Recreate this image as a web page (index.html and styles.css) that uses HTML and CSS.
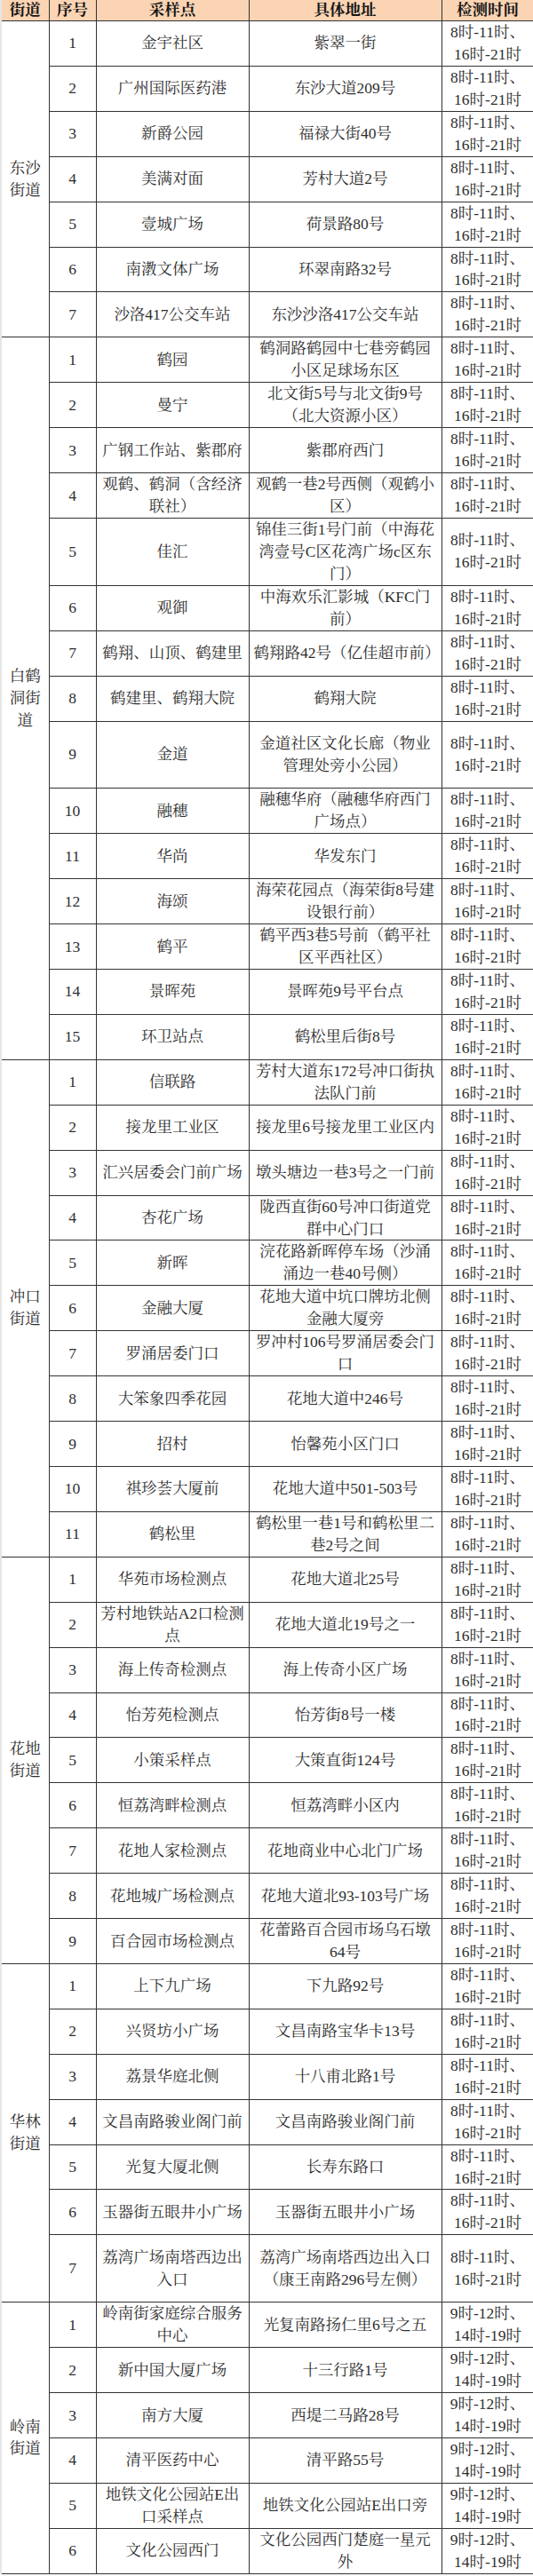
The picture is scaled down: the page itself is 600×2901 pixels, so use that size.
FILE: index.html
```html
<!DOCTYPE html>
<html lang="zh-CN">
<head>
<meta charset="utf-8">
<title>核酸采样点</title>
<link rel="stylesheet" href="styles.css">
</head>
<body>
<table class="sched">
<colgroup>
<col class="c-street"><col class="c-no"><col class="c-site"><col class="c-addr"><col class="c-time">
</colgroup>
<thead>
<tr><th>街道</th><th>序号</th><th>采样点</th><th>具体地址</th><th>检测时间</th></tr>
</thead>
<tbody>
<tr><td class="street" rowspan="7">东沙街道</td><td class="no">1</td><td class="site">金宇社区</td><td>紫翠一街</td><td class="time">8时-11时、<br>16时-21时</td></tr>
<tr><td class="no">2</td><td class="site">广州国际医药港</td><td>东沙大道209号</td><td class="time">8时-11时、<br>16时-21时</td></tr>
<tr><td class="no">3</td><td class="site">新爵公园</td><td>福禄大街40号</td><td class="time">8时-11时、<br>16时-21时</td></tr>
<tr><td class="no">4</td><td class="site">美满对面</td><td>芳村大道2号</td><td class="time">8时-11时、<br>16时-21时</td></tr>
<tr><td class="no">5</td><td class="site">壹城广场</td><td>荷景路80号</td><td class="time">8时-11时、<br>16时-21时</td></tr>
<tr><td class="no">6</td><td class="site">南漖文体广场</td><td>环翠南路32号</td><td class="time">8时-11时、<br>16时-21时</td></tr>
<tr><td class="no">7</td><td class="site">沙洛417公交车站</td><td>东沙沙洛417公交车站</td><td class="time">8时-11时、<br>16时-21时</td></tr>

<tr><td class="street" rowspan="15">白鹤洞街道</td><td class="no">1</td><td class="site">鹤园</td><td>鹤洞路鹤园中七巷旁鹤园小区足球场东区</td><td class="time">8时-11时、<br>16时-21时</td></tr>
<tr><td class="no">2</td><td class="site">曼宁</td><td>北文街5号与北文街9号（北大资源小区）</td><td class="time">8时-11时、<br>16时-21时</td></tr>
<tr><td class="no">3</td><td class="site">广钢工作站、紫郡府</td><td>紫郡府西门</td><td class="time">8时-11时、<br>16时-21时</td></tr>
<tr><td class="no">4</td><td class="site">观鹤、鹤洞（含经济联社）</td><td>观鹤一巷2号西侧（观鹤小区）</td><td class="time">8时-11时、<br>16时-21时</td></tr>
<tr><td class="no">5</td><td class="site">佳汇</td><td>锦佳三街1号门前（中海花湾壹号C区花湾广场c区东门）</td><td class="time">8时-11时、<br>16时-21时</td></tr>
<tr><td class="no">6</td><td class="site">观御</td><td>中海欢乐汇影城（KFC门前）</td><td class="time">8时-11时、<br>16时-21时</td></tr>
<tr><td class="no">7</td><td class="site">鹤翔、山顶、鹤建里</td><td>鹤翔路42号（亿佳超市前）</td><td class="time">8时-11时、<br>16时-21时</td></tr>
<tr><td class="no">8</td><td class="site">鹤建里、鹤翔大院</td><td>鹤翔大院</td><td class="time">8时-11时、<br>16时-21时</td></tr>
<tr class="tall"><td class="no">9</td><td class="site">金道</td><td>金道社区文化长廊（物业管理处旁小公园）</td><td class="time">8时-11时、<br>16时-21时</td></tr>
<tr><td class="no">10</td><td class="site">融穗</td><td>融穗华府（融穗华府西门广场点）</td><td class="time">8时-11时、<br>16时-21时</td></tr>
<tr><td class="no">11</td><td class="site">华尚</td><td>华发东门</td><td class="time">8时-11时、<br>16时-21时</td></tr>
<tr><td class="no">12</td><td class="site">海颂</td><td>海荣花园点（海荣街8号建设银行前）</td><td class="time">8时-11时、<br>16时-21时</td></tr>
<tr><td class="no">13</td><td class="site">鹤平</td><td>鹤平西3巷5号前（鹤平社区平西社区）</td><td class="time">8时-11时、<br>16时-21时</td></tr>
<tr><td class="no">14</td><td class="site">景晖苑</td><td>景晖苑9号平台点</td><td class="time">8时-11时、<br>16时-21时</td></tr>
<tr><td class="no">15</td><td class="site">环卫站点</td><td>鹤松里后街8号</td><td class="time">8时-11时、<br>16时-21时</td></tr>

<tr><td class="street" rowspan="11">冲口街道</td><td class="no">1</td><td class="site">信联路</td><td>芳村大道东172号冲口街执法队门前</td><td class="time">8时-11时、<br>16时-21时</td></tr>
<tr><td class="no">2</td><td class="site">接龙里工业区</td><td>接龙里6号接龙里工业区内</td><td class="time">8时-11时、<br>16时-21时</td></tr>
<tr><td class="no">3</td><td class="site">汇兴居委会门前广场</td><td>墩头塘边一巷3号之一门前</td><td class="time">8时-11时、<br>16时-21时</td></tr>
<tr><td class="no">4</td><td class="site">杏花广场</td><td>陇西直街60号冲口街道党群中心门口</td><td class="time">8时-11时、<br>16时-21时</td></tr>
<tr><td class="no">5</td><td class="site">新晖</td><td>浣花路新晖停车场（沙涌涌边一巷40号侧）</td><td class="time">8时-11时、<br>16时-21时</td></tr>
<tr><td class="no">6</td><td class="site">金融大厦</td><td>花地大道中坑口牌坊北侧金融大厦旁</td><td class="time">8时-11时、<br>16时-21时</td></tr>
<tr><td class="no">7</td><td class="site">罗涌居委门口</td><td>罗冲村106号罗涌居委会门口</td><td class="time">8时-11时、<br>16时-21时</td></tr>
<tr><td class="no">8</td><td class="site">大笨象四季花园</td><td>花地大道中246号</td><td class="time">8时-11时、<br>16时-21时</td></tr>
<tr><td class="no">9</td><td class="site">招村</td><td>怡馨苑小区门口</td><td class="time">8时-11时、<br>16时-21时</td></tr>
<tr><td class="no">10</td><td class="site">祺珍荟大厦前</td><td>花地大道中501-503号</td><td class="time">8时-11时、<br>16时-21时</td></tr>
<tr><td class="no">11</td><td class="site">鹤松里</td><td>鹤松里一巷1号和鹤松里二巷2号之间</td><td class="time">8时-11时、<br>16时-21时</td></tr>

<tr><td class="street" rowspan="9">花地街道</td><td class="no">1</td><td class="site">华苑市场检测点</td><td>花地大道北25号</td><td class="time">8时-11时、<br>16时-21时</td></tr>
<tr><td class="no">2</td><td class="site">芳村地铁站A2口检测点</td><td>花地大道北19号之一</td><td class="time">8时-11时、<br>16时-21时</td></tr>
<tr><td class="no">3</td><td class="site">海上传奇检测点</td><td>海上传奇小区广场</td><td class="time">8时-11时、<br>16时-21时</td></tr>
<tr><td class="no">4</td><td class="site">怡芳苑检测点</td><td>怡芳街8号一楼</td><td class="time">8时-11时、<br>16时-21时</td></tr>
<tr><td class="no">5</td><td class="site">小策采样点</td><td>大策直街124号</td><td class="time">8时-11时、<br>16时-21时</td></tr>
<tr><td class="no">6</td><td class="site">恒荔湾畔检测点</td><td>恒荔湾畔小区内</td><td class="time">8时-11时、<br>16时-21时</td></tr>
<tr><td class="no">7</td><td class="site">花地人家检测点</td><td>花地商业中心北门广场</td><td class="time">8时-11时、<br>16时-21时</td></tr>
<tr><td class="no">8</td><td class="site">花地城广场检测点</td><td>花地大道北93-103号广场</td><td class="time">8时-11时、<br>16时-21时</td></tr>
<tr><td class="no">9</td><td class="site">百合园市场检测点</td><td>花蕾路百合园市场乌石墩64号</td><td class="time">8时-11时、<br>16时-21时</td></tr>

<tr><td class="street" rowspan="7">华林街道</td><td class="no">1</td><td class="site">上下九广场</td><td>下九路92号</td><td class="time">8时-11时、<br>16时-21时</td></tr>
<tr><td class="no">2</td><td class="site">兴贤坊小广场</td><td>文昌南路宝华卡13号</td><td class="time">8时-11时、<br>16时-21时</td></tr>
<tr><td class="no">3</td><td class="site">荔景华庭北侧</td><td>十八甫北路1号</td><td class="time">8时-11时、<br>16时-21时</td></tr>
<tr><td class="no">4</td><td class="site">文昌南路骏业阁门前</td><td>文昌南路骏业阁门前</td><td class="time">8时-11时、<br>16时-21时</td></tr>
<tr><td class="no">5</td><td class="site">光复大厦北侧</td><td>长寿东路口</td><td class="time">8时-11时、<br>16时-21时</td></tr>
<tr><td class="no">6</td><td class="site">玉器街五眼井小广场</td><td>玉器街五眼井小广场</td><td class="time">8时-11时、<br>16时-21时</td></tr>
<tr class="tall"><td class="no">7</td><td class="site">荔湾广场南塔西边出入口</td><td>荔湾广场南塔西边出入口（康王南路296号左侧）</td><td class="time">8时-11时、<br>16时-21时</td></tr>

<tr><td class="street" rowspan="6">岭南街道</td><td class="no">1</td><td class="site">岭南街家庭综合服务中心</td><td>光复南路扬仁里6号之五</td><td class="time">9时-12时、<br>14时-19时</td></tr>
<tr><td class="no">2</td><td class="site">新中国大厦广场</td><td>十三行路1号</td><td class="time">9时-12时、<br>14时-19时</td></tr>
<tr><td class="no">3</td><td class="site">南方大厦</td><td>西堤二马路28号</td><td class="time">9时-12时、<br>14时-19时</td></tr>
<tr><td class="no">4</td><td class="site">清平医药中心</td><td>清平路55号</td><td class="time">9时-12时、<br>14时-19时</td></tr>
<tr><td class="no">5</td><td class="site">地铁文化公园站E出口采样点</td><td>地铁文化公园站E出口旁</td><td class="time">9时-12时、<br>14时-19时</td></tr>
<tr><td class="no">6</td><td class="site">文化公园西门</td><td>文化公园西门楚庭一星元外</td><td class="time">9时-12时、<br>14时-19时</td></tr>
</tbody>
</table>
</body>
</html>
```

FILE: styles.css
```css
html, body {
  margin: 0;
  padding: 0;
  background: #ffffff;
}

.sched {
  width: 600px;
  border-collapse: collapse;
  table-layout: fixed;
  font-family: "Liberation Serif", "Noto Serif CJK SC", "Noto Sans CJK SC", serif;
  font-size: 17.5px;
  line-height: 24.95px;
  color: #2e2e2e;
}

.c-street { width: 54px; }
.c-no { width: 53px; }
.c-site { width: 172px; }
.c-addr { width: 217px; }
.c-time { width: 104px; }

.sched th {
  background: #fbd4b4;
  color: #151515;
  font-weight: bold;
  height: 23px;
  line-height: 23px;
  padding: 0;
  text-align: center;
  border: 1px solid #333333;
  border-top: none;
}

.sched td {
  border: 1px solid #333333;
  padding: 0 5px;
  text-align: center;
  vertical-align: middle;
}

.sched th:first-child,
.sched td.street {
  border-left: 2px solid #e6e6e6;
}

.sched td.street {
  padding: 0 5px;
}

.sched td.site {
  padding: 0 4px;
}

.sched td.no {
  padding: 0 2px;
}

.sched td.time {
  padding: 0 2px;
  white-space: nowrap;
}

.sched tr.tall td {
  height: 74.85px;
}
```
